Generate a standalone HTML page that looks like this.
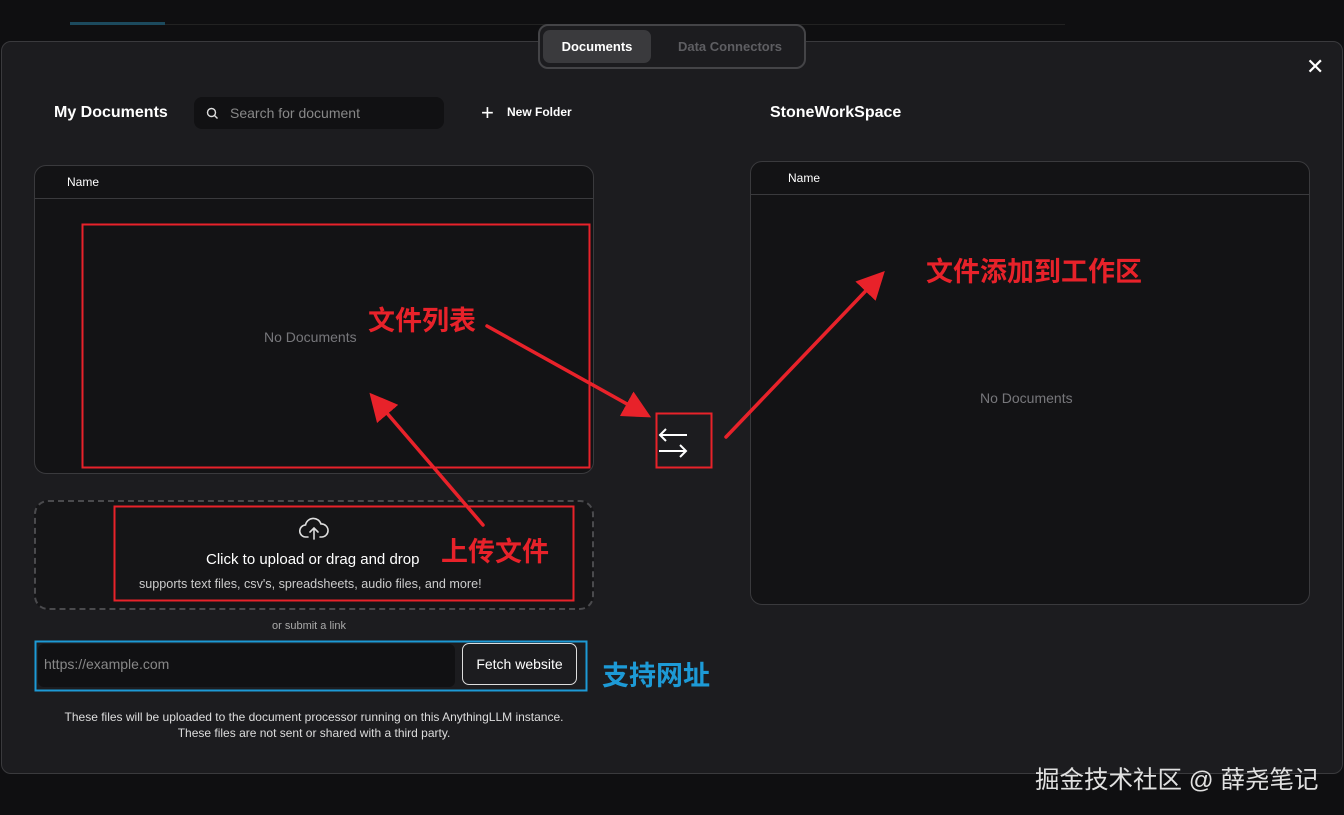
<!DOCTYPE html>
<html><head><meta charset="utf-8"><style>
*{box-sizing:border-box;margin:0;padding:0}
body{width:1344px;height:815px;background:#0f0f11;font-family:"Liberation Sans","Noto Sans CJK SC",sans-serif;color:#fff;position:relative;overflow:hidden}
.abs{position:absolute}
.modal{left:1px;top:41px;width:1342px;height:733px;background:#1c1c1f;border:1px solid #3a3a3d;border-radius:10px}
.tabs{left:538px;top:24px;width:268px;height:45px;background:#1c1c1f;border:2px solid #444447;border-radius:10px}
.tab1{left:543px;top:30px;width:108px;height:33px;background:#3a3a3d;border-radius:7px;font-size:13px;font-weight:bold;text-align:center;line-height:33px}
.tab2{left:660px;top:30px;width:140px;height:33px;font-size:13px;font-weight:bold;color:#5e5e62;text-align:center;line-height:33px}
.tbl{background:#131315;border:1px solid #3a3a3d;border-radius:12px}
.hd{font-size:12px;position:absolute}
.nd{font-size:14px;color:#77777b;position:absolute}
</style></head><body>
<div class="abs" style="left:70px;top:22px;width:95px;height:3px;background:#1c4a5e"></div>
<div class="abs" style="left:165px;top:24px;width:900px;height:1px;background:#222"></div>
<div class="abs modal"></div>
<div class="abs tabs"></div>
<div class="abs tab1">Documents</div>
<div class="abs tab2">Data Connectors</div>
<div class="abs" style="left:1306px;top:54px;font-size:22px;color:#fff">✕</div>
<div class="abs" style="left:54px;top:104px;font-size:16px;font-weight:bold">My Documents</div>
<div class="abs" style="left:194px;top:97px;width:250px;height:32px;background:#111113;border-radius:8px"></div>
<svg class="abs" style="left:206px;top:107px" width="13" height="13" viewBox="0 0 13 13"><circle cx="5.5" cy="5.5" r="4" stroke="#ddd" stroke-width="1.4" fill="none"/><line x1="8.5" y1="8.5" x2="11.5" y2="11.5" stroke="#ddd" stroke-width="1.4"/></svg>
<div class="abs" style="left:230px;top:105px;font-size:14px;color:#888">Search for document</div>
<div class="abs" style="left:481px;top:100px;font-size:22px;font-weight:300">+</div>
<div class="abs" style="left:507px;top:105px;font-size:12px;font-weight:bold">New Folder</div>
<div class="abs" style="left:770px;top:104px;font-size:16px;font-weight:bold">StoneWorkSpace</div>
<div class="abs tbl" style="left:34px;top:165px;width:560px;height:309px"></div>
<div class="abs" style="left:35px;top:198px;width:558px;height:1px;background:#3a3a3d"></div>
<div class="hd" style="left:67px;top:175px">Name</div>
<div class="nd" style="left:264px;top:329px">No Documents</div>
<div class="abs tbl" style="left:750px;top:161px;width:560px;height:444px"></div>
<div class="abs" style="left:751px;top:194px;width:558px;height:1px;background:#3a3a3d"></div>
<div class="hd" style="left:788px;top:171px">Name</div>
<div class="nd" style="left:980px;top:390px">No Documents</div>
<div class="abs" style="left:34px;top:500px;width:560px;height:110px;border:2px dashed #4a4a4d;border-radius:14px;background:#151517"></div>
<svg class="abs" style="left:299px;top:517px" width="30" height="24" viewBox="0 0 30 24"><path d="M9 20H7a6 6 0 0 1-0.5-12A8 8 0 0 1 22 7a6 6 0 0 1 1 13h-2" stroke="#ddd" stroke-width="1.6" fill="none" stroke-linecap="round"/><path d="M15 22V12M11 15l4-4 4 4" stroke="#ddd" stroke-width="1.6" fill="none" stroke-linecap="round"/></svg>
<div class="abs" style="left:206px;top:551px;font-size:15px">Click to upload or drag and drop</div>
<div class="abs" style="left:139px;top:577px;font-size:12.6px;color:#ccc">supports text files, csv's, spreadsheets, audio files, and more!</div>
<div class="abs" style="left:272px;top:620px;font-size:11px;color:#aaa">or submit a link</div>
<div class="abs" style="left:38px;top:644px;width:417px;height:43px;background:#111113;border-radius:6px"></div>
<div class="abs" style="left:44px;top:656px;font-size:14px;color:#888">https://example.com</div>
<div class="abs" style="left:462px;top:643px;width:115px;height:42px;border:1px solid #ddd;border-radius:7px;font-size:14px;text-align:center;line-height:40px">Fetch website</div>
<div class="abs" style="left:0;top:709px;width:628px;text-align:center;font-size:12px;color:#ddd;line-height:16px">These files will be uploaded to the document processor running on this AnythingLLM instance.<br>These files are not sent or shared with a third party.</div>
<svg class="abs" style="left:657px;top:425px" width="32" height="34" viewBox="0 0 32 34"><path d="M30 10H3M9 4L3 10l6 6M2 26h27M23 20l6 6-6 6" stroke="#fff" stroke-width="2" fill="none"/></svg>
<svg class="abs" style="left:0;top:0" width="1344" height="815">
<defs><marker id="ah" markerWidth="8" markerHeight="8" refX="6" refY="4" orient="auto" markerUnits="strokeWidth"><path d="M0 0L8 4L0 8z" fill="#e8222a"/></marker></defs>
<g fill="none" stroke="#e8222a" stroke-width="2"><rect x="82.5" y="224.5" width="507" height="243"/><rect x="656.5" y="413.5" width="55" height="54"/><rect x="114.5" y="506.5" width="459" height="94"/></g>
<rect x="35.5" y="641.5" width="551" height="49" fill="none" stroke="#1d9ad6" stroke-width="2"/>
<g stroke="#e8222a" stroke-width="3.5" stroke-linecap="round"><line x1="487" y1="326" x2="645" y2="414" marker-end="url(#ah)"/><line x1="483" y1="525" x2="374" y2="398" marker-end="url(#ah)"/><line x1="726" y1="437" x2="880" y2="276" marker-end="url(#ah)"/></g>
</svg>
<div class="abs" style="left:368px;top:299px;font-size:27px;font-weight:bold;color:#e8222a">文件列表</div>
<div class="abs" style="left:441px;top:530px;font-size:27px;font-weight:bold;color:#e8222a">上传文件</div>
<div class="abs" style="left:926px;top:250px;font-size:27px;font-weight:bold;color:#e8222a">文件添加到工作区</div>
<div class="abs" style="left:602px;top:654px;font-size:27px;font-weight:bold;color:#1d9ad6">支持网址</div>
<div class="abs" style="left:1035px;top:761px;font-size:24.5px;color:#e0e0e0">掘金技术社区 @ 薛尧笔记</div>
</body></html>
